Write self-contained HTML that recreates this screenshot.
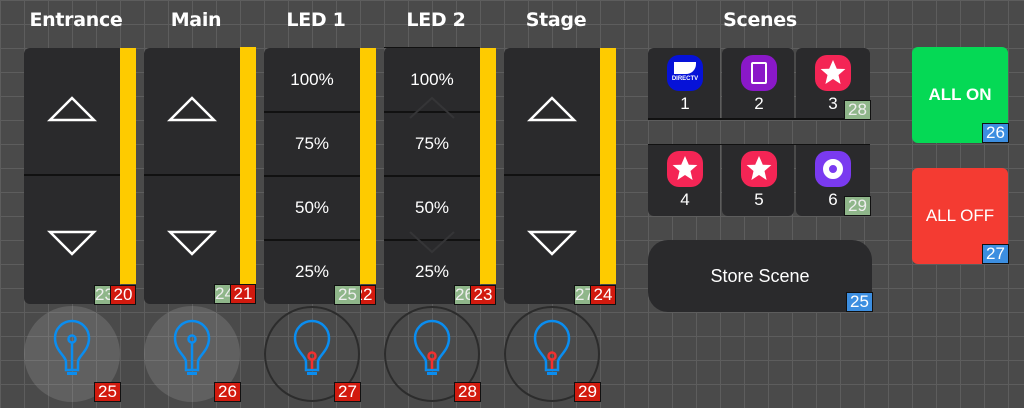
<!DOCTYPE html>
<html><head><meta charset="utf-8"><style>
*{margin:0;padding:0;box-sizing:border-box}
body{width:1024px;height:408px;overflow:hidden;position:relative;font-family:"Liberation Sans","DejaVu Sans",sans-serif;color:#fff;
background-color:#4a4a4a;
background-image:linear-gradient(to right,#5d5d5d 1px,transparent 1px),linear-gradient(to bottom,#5d5d5d 1px,transparent 1px);
background-size:24px 24px;}
.a{position:absolute}
.h{position:absolute;top:9px;font-size:19px;font-weight:bold;text-align:center;width:104px;font-family:"DejaVu Sans","Liberation Sans",sans-serif;letter-spacing:-0.3px}
.p{position:absolute;top:48px;width:96px;height:256px;background:#2a2a2c;border-radius:6px 0 0 6px}
.y{position:absolute;top:48px;width:16px;height:236px;background:#fecb00}
.ln{position:absolute;height:2px;background:#111;width:96px}
.b{position:absolute;height:20px;font-size:17px;line-height:18px;text-align:center;border:1px solid #111;color:#fff}
.r{background:#d21a0e}
.g{background:#8fb68a;color:#eee}
.bl{background:#3c8ee0}
.pc{position:absolute;font-size:17px;width:96px;text-align:center}
.c{position:absolute;top:306px;width:96px;height:96px;border-radius:50%}
.cell{position:absolute;width:72px;background:#2a2a2c;border-radius:6px}
.ic{position:absolute;width:36px;height:36px;border-radius:12px}
.n{position:absolute;font-size:17px;width:20px;text-align:center}
</style></head><body>
<div class="h" style="left:24px">Entrance</div>
<div class="h" style="left:144px">Main</div>
<div class="h" style="left:264px">LED 1</div>
<div class="h" style="left:384px">LED 2</div>
<div class="h" style="left:504px">Stage</div>
<div class="h" style="left:680px;width:160px">Scenes</div>

<div class="p" style="left:24px"></div><div class="y" style="left:120px"></div><div class="ln" style="left:24px;top:174px"></div>
<div class="p" style="left:144px"></div><div class="y" style="left:240px;top:47px;height:237px"></div><div class="ln" style="left:144px;top:174px"></div>
<div class="p" style="left:264px"></div><div class="y" style="left:360px"></div>
<div class="p" style="left:384px;top:47px;height:257px"></div><div class="y" style="left:480px"></div>
<div class="p" style="left:504px"></div><div class="y" style="left:600px"></div><div class="ln" style="left:504px;top:174px"></div>
<div class="ln" style="left:264px;top:111px"></div><div class="ln" style="left:264px;top:175px"></div><div class="ln" style="left:264px;top:239px"></div>
<div class="ln" style="left:384px;top:47px;height:1px"></div>
<div class="ln" style="left:384px;top:111px"></div><div class="ln" style="left:384px;top:175px"></div><div class="ln" style="left:384px;top:239px"></div>
<svg class="a" style="left:0;top:0" width="640" height="408">
<g fill="none" stroke="#fff" stroke-width="2.5">
<path d="M50 120 L72 98 L94 120 Z"/><path d="M50 232 L72 254 L94 232 Z"/>
<path d="M170 120 L192 98 L214 120 Z"/><path d="M170 232 L192 254 L214 232 Z"/>
<path d="M530 120 L552 98 L574 120 Z"/><path d="M530 232 L552 254 L574 232 Z"/>
</g>
<g fill="none" stroke="#353537" stroke-width="2"><path d="M410 118 L432 98 L454 118"/><path d="M410 232 L432 252 L454 232"/></g>
</svg>
<div class="pc" style="left:264px;top:70px">100%</div><div class="pc" style="left:264px;top:134px">75%</div><div class="pc" style="left:264px;top:198px">50%</div><div class="pc" style="left:264px;top:262px">25%</div>
<div class="pc" style="left:384px;top:70px">100%</div><div class="pc" style="left:384px;top:134px">75%</div><div class="pc" style="left:384px;top:198px">50%</div><div class="pc" style="left:384px;top:262px">25%</div>

<div class="b g" style="left:94px;top:285px;width:17px;overflow:hidden">23</div><div class="b r" style="left:110px;top:285px;width:26px">20</div>
<div class="b g" style="left:214px;top:284px;width:17px;overflow:hidden">24</div><div class="b r" style="left:230px;top:284px;width:26px">21</div>
<div class="b g" style="left:334px;top:285px;width:27px">25</div><div class="b r" style="left:360px;top:285px;width:16px;overflow:hidden;text-indent:-10px">22</div>
<div class="b g" style="left:454px;top:285px;width:17px;overflow:hidden">26</div><div class="b r" style="left:470px;top:285px;width:26px">23</div>
<div class="b g" style="left:574px;top:285px;width:17px;overflow:hidden">27</div><div class="b r" style="left:590px;top:285px;width:26px">24</div>

<div class="c" style="left:24px;background:rgba(255,255,255,0.12)"></div>
<div class="c" style="left:144px;background:rgba(255,255,255,0.12)"></div>
<div class="c" style="left:264px;border:2px solid #2c2c2c"></div>
<div class="c" style="left:384px;border:2px solid #2c2c2c"></div>
<div class="c" style="left:504px;border:2px solid #2c2c2c"></div>
<svg class="a" style="left:0;top:0" width="640" height="408">
<defs><g id="bulb" fill="none" stroke-width="2.5" stroke-linecap="round">
<path d="M-6 24 L-6 16 C-6 10 -17 5 -17 -8 A17 17 0 1 1 17 -8 C17 5 6 10 6 16 L6 24 Z" stroke="#0a8df0"/>
<rect x="-5" y="26" width="10" height="3" fill="#0a8df0" stroke="none"/>
</g></defs>
<g transform="translate(72,346)"><use href="#bulb"/><path d="M0 -3 V23" stroke="#0a8df0" stroke-width="2.5"/><circle cy="-7" r="3.5" fill="none" stroke="#0a8df0" stroke-width="2.5"/></g>
<g transform="translate(192,346)"><use href="#bulb"/><path d="M0 -3 V23" stroke="#0a8df0" stroke-width="2.5"/><circle cy="-7" r="3.5" fill="none" stroke="#0a8df0" stroke-width="2.5"/></g>
<g transform="translate(312,346)"><use href="#bulb"/><path d="M0 14 V23" stroke="#f03030" stroke-width="2.5"/><circle cy="10" r="3.5" fill="none" stroke="#f03030" stroke-width="2.5"/></g>
<g transform="translate(432,346)"><use href="#bulb"/><path d="M0 14 V23" stroke="#f03030" stroke-width="2.5"/><circle cy="10" r="3.5" fill="none" stroke="#f03030" stroke-width="2.5"/></g>
<g transform="translate(552,346)"><use href="#bulb"/><path d="M0 14 V23" stroke="#f03030" stroke-width="2.5"/><circle cy="10" r="3.5" fill="none" stroke="#f03030" stroke-width="2.5"/></g>
</svg>
<div class="b r" style="left:94px;top:382px;width:27px">25</div>
<div class="b r" style="left:214px;top:382px;width:27px">26</div>
<div class="b r" style="left:334px;top:382px;width:27px">27</div>
<div class="b r" style="left:454px;top:382px;width:27px">28</div>
<div class="b r" style="left:574px;top:382px;width:27px">29</div>

<div class="cell" style="left:648px;top:48px;height:72px;border-radius:6px 0 0 0"></div>
<div class="cell" style="left:722px;top:48px;height:72px;border-radius:6px 6px 0 0"></div>
<div class="cell" style="left:796px;top:48px;height:72px;width:74px;border-radius:6px 6px 0 0"></div>
<div class="a" style="left:648px;top:118px;width:222px;height:2px;background:#111"></div>
<div class="cell" style="left:648px;top:144px;height:72px;border-radius:0 0 0 6px"></div>
<div class="cell" style="left:722px;top:144px;height:72px;border-radius:0 0 6px 6px"></div>
<div class="cell" style="left:796px;top:144px;height:72px;width:74px;border-radius:0 0 6px 6px"></div>
<div class="a" style="left:648px;top:144px;width:222px;height:1px;background:#111"></div>
<div class="ic" style="left:667px;top:55px;background:#0612d8"></div>
<div class="a" style="left:674px;top:62px;width:22px;height:12px;background:#fff;border-radius:0 0 10px 0"></div>
<div class="a" style="left:668px;top:76px;width:34px;font-size:6px;font-weight:bold;text-align:center">DIRECTV</div>
<div class="ic" style="left:741px;top:55px;background:#8a18c8"></div>
<div class="a" style="left:751px;top:62px;width:16px;height:22px;border:2px solid #fff;border-radius:2px"></div>
<div class="ic" style="left:815px;top:55px;background:#f42555"></div>
<div class="ic" style="left:667px;top:151px;background:#f42555"></div>
<div class="ic" style="left:741px;top:151px;background:#f42555"></div>
<div class="ic" style="left:815px;top:151px;background:#7a3af0"></div>
<div class="a" style="left:823px;top:159px;width:20px;height:20px;border-radius:50%;border:6px solid #fff"></div>
<svg class="a" style="left:0;top:0" width="1024" height="408"><g fill="#fff">
<path id="st" transform="translate(833,73)" d="M0 -13 L3.8 -4.2 L12.4 -4 L5.5 2 L7.6 11 L0 6 L-7.6 11 L-5.5 2 L-12.4 -4 L-3.8 -4.2 Z"/>
<use href="#st" transform="translate(-148,96)"/><use href="#st" transform="translate(-74,96)"/>
</g></svg>
<div class="n" style="left:675px;top:94px">1</div><div class="n" style="left:749px;top:94px">2</div><div class="n" style="left:823px;top:94px">3</div>
<div class="n" style="left:675px;top:190px">4</div><div class="n" style="left:749px;top:190px">5</div><div class="n" style="left:823px;top:190px">6</div>
<div class="b g" style="left:844px;top:100px;width:27px">28</div>
<div class="b g" style="left:844px;top:196px;width:27px">29</div>
<div class="a" style="left:648px;top:240px;width:224px;height:72px;background:#2a2a2c;border-radius:20px;font-size:18px;text-align:center;line-height:72px">Store Scene</div>
<div class="b bl" style="left:846px;top:292px;width:27px">25</div>
<div class="a" style="left:912px;top:47px;width:96px;height:96px;background:#05d955;border-radius:6px;font-weight:bold;font-size:17px;text-align:center;line-height:96px">ALL ON</div>
<div class="b bl" style="left:982px;top:123px;width:27px">26</div>
<div class="a" style="left:912px;top:168px;width:96px;height:96px;background:#f43b32;border-radius:6px;font-size:17px;text-align:center;line-height:96px">ALL OFF</div>
<div class="b bl" style="left:982px;top:244px;width:27px">27</div>
</body></html>
